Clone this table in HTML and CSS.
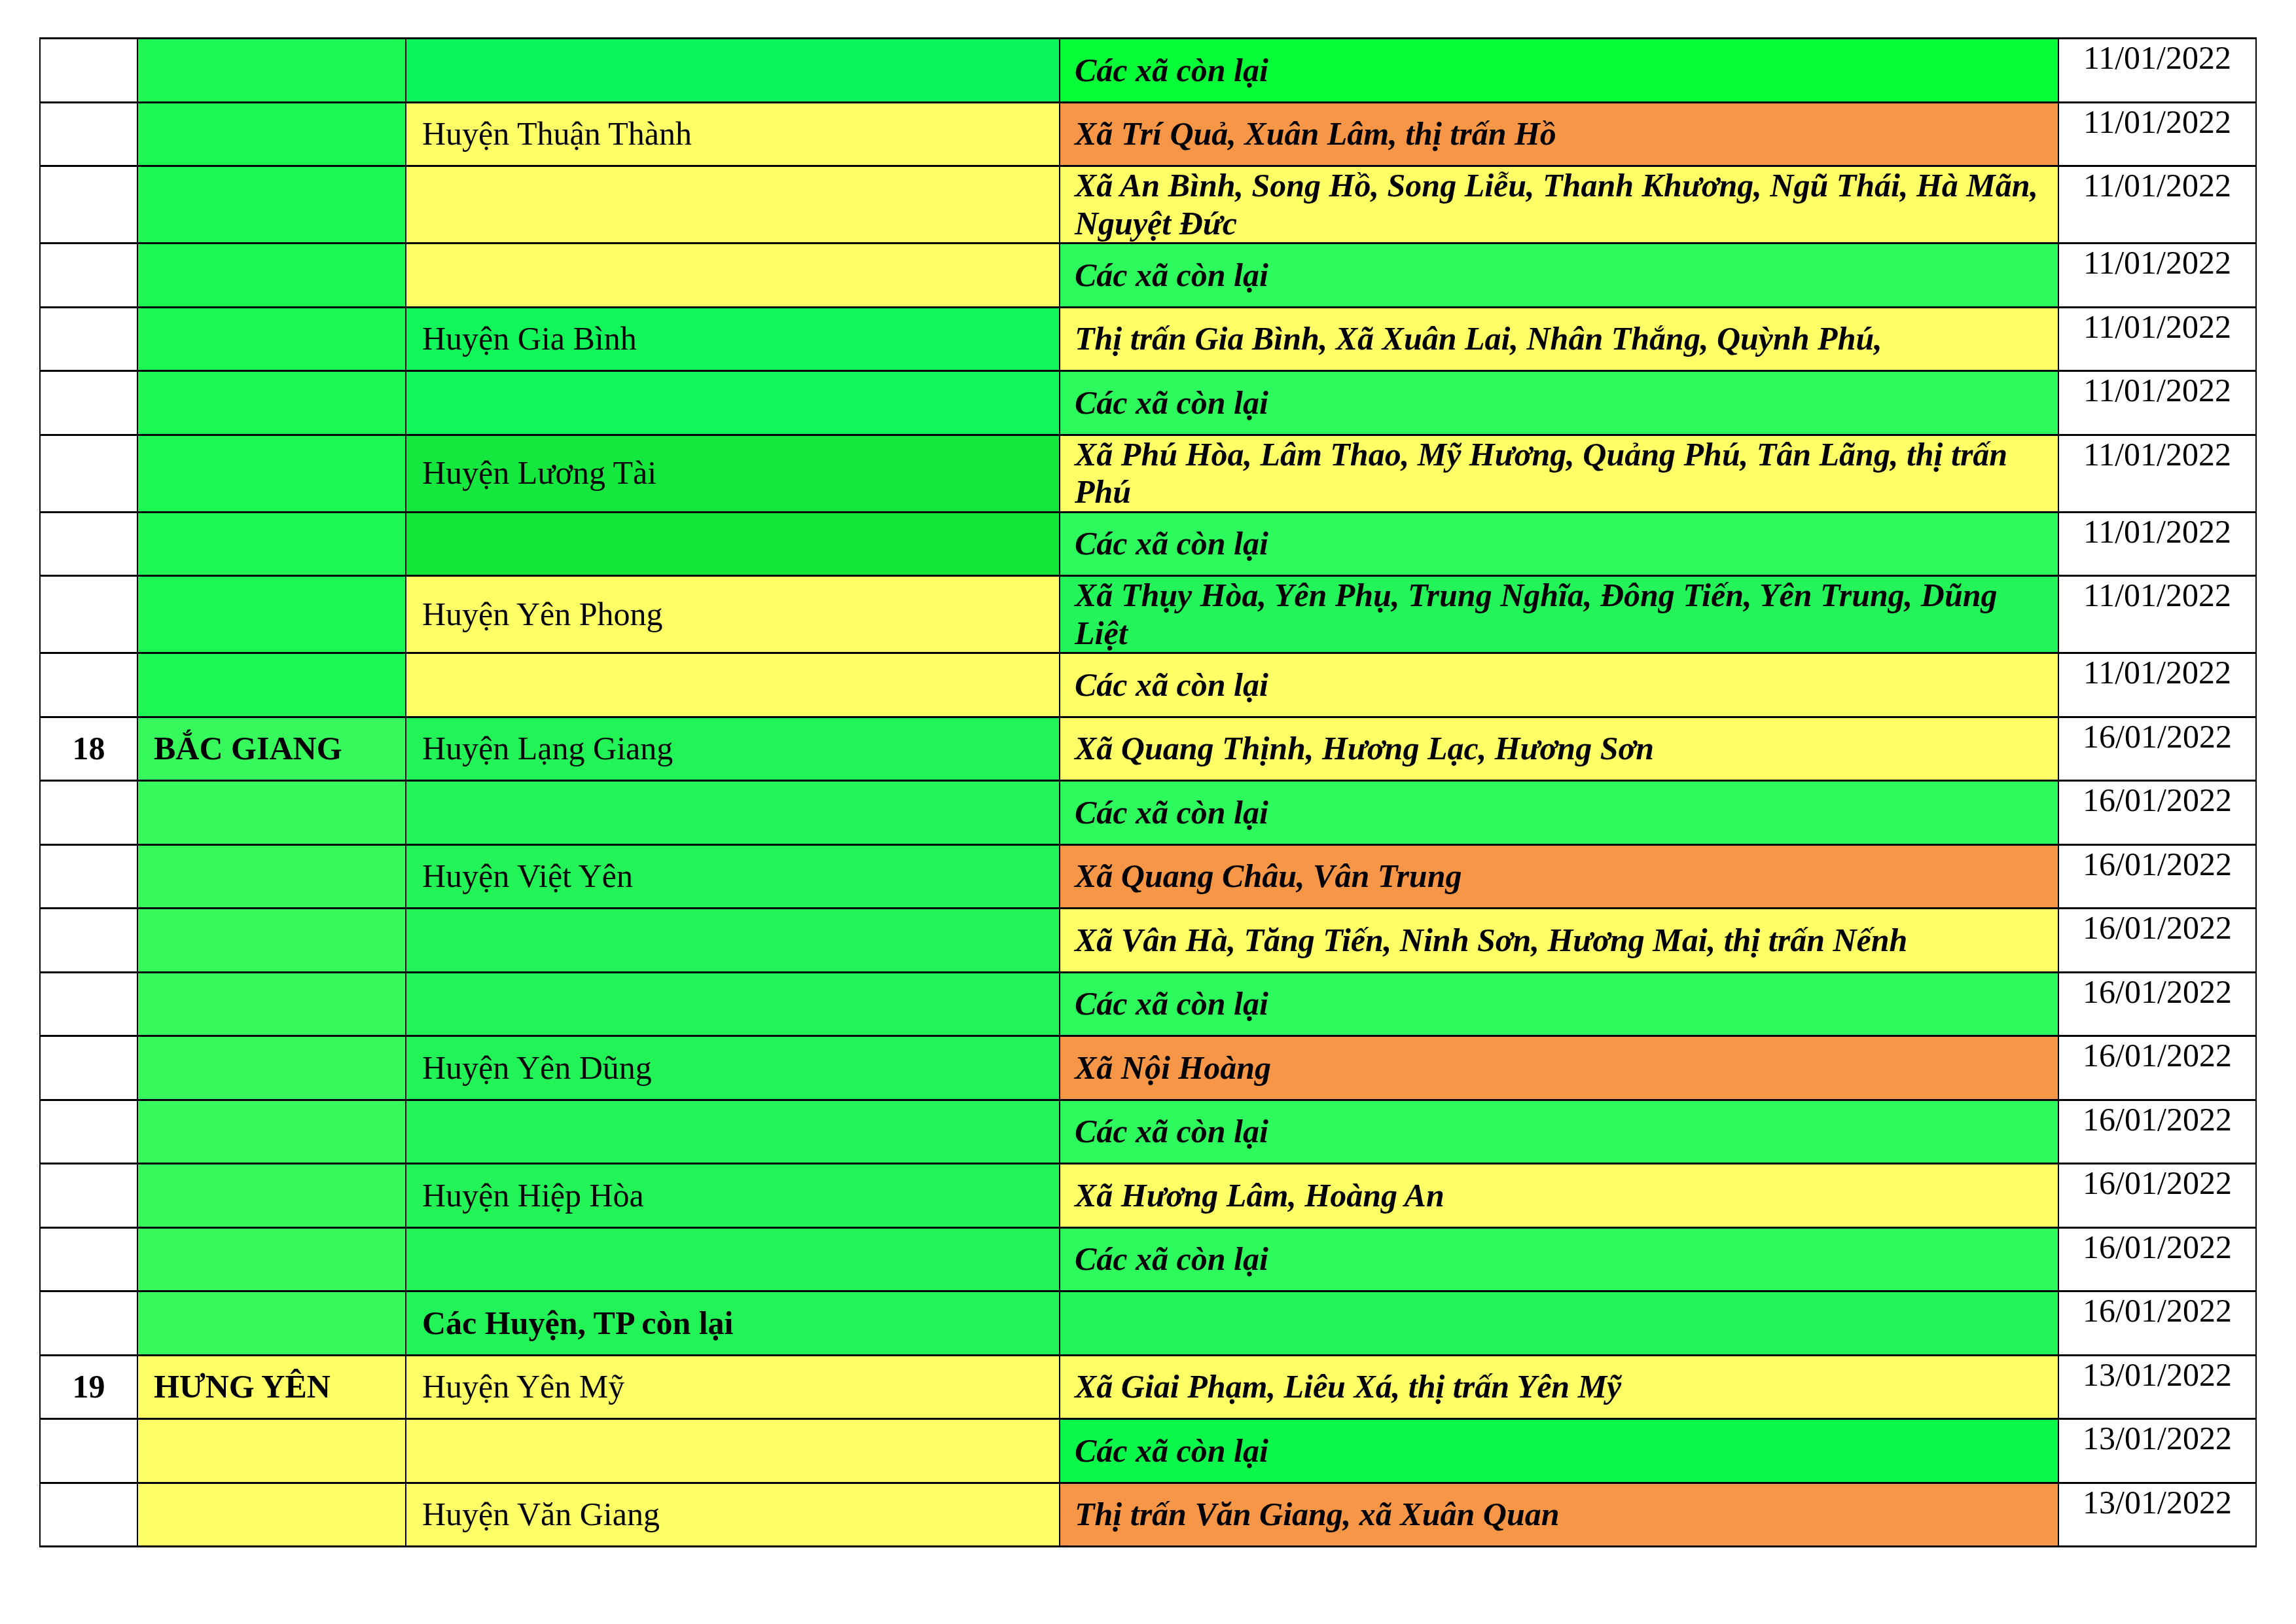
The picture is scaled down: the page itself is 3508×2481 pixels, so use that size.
FILE: index.html
```html
<!DOCTYPE html>
<html lang="vi">
<head>
<meta charset="utf-8">
<title>Bảng đánh giá cấp độ dịch</title>
<link rel="stylesheet" href="styles.css">
</head>
<body>
<div class="page">
  <div class="table">
    <div class="row">
      <div class="cell num"></div>
      <div class="cell prov c-g1"></div>
      <div class="cell dist c-mint"></div>
      <div class="cell comm c-lime">Các xã còn lại</div>
      <div class="cell date">11/01/2022</div>
    </div>
    <div class="row">
      <div class="cell num"></div>
      <div class="cell prov c-g1"></div>
      <div class="cell dist c-yellow">Huyện Thuận Thành</div>
      <div class="cell comm c-orange">Xã Trí Quả, Xuân Lâm, thị trấn Hồ</div>
      <div class="cell date">11/01/2022</div>
    </div>
    <div class="row">
      <div class="cell num"></div>
      <div class="cell prov c-g1"></div>
      <div class="cell dist c-yellow"></div>
      <div class="cell comm c-yellow">Xã An Bình, Song Hồ, Song Liễu, Thanh Khương, Ngũ Thái, Hà Mãn, Nguyệt Đức</div>
      <div class="cell date">11/01/2022</div>
    </div>
    <div class="row">
      <div class="cell num"></div>
      <div class="cell prov c-g1"></div>
      <div class="cell dist c-yellow"></div>
      <div class="cell comm c-green">Các xã còn lại</div>
      <div class="cell date">11/01/2022</div>
    </div>
    <div class="row">
      <div class="cell num"></div>
      <div class="cell prov c-g1"></div>
      <div class="cell dist c-mint2">Huyện Gia Bình</div>
      <div class="cell comm c-yellow">Thị trấn Gia Bình, Xã Xuân Lai, Nhân Thắng, Quỳnh Phú,</div>
      <div class="cell date">11/01/2022</div>
    </div>
    <div class="row">
      <div class="cell num"></div>
      <div class="cell prov c-g1"></div>
      <div class="cell dist c-mint2"></div>
      <div class="cell comm c-green">Các xã còn lại</div>
      <div class="cell date">11/01/2022</div>
    </div>
    <div class="row">
      <div class="cell num"></div>
      <div class="cell prov c-g1"></div>
      <div class="cell dist c-deep">Huyện Lương Tài</div>
      <div class="cell comm c-yellow">Xã Phú Hòa, Lâm Thao, Mỹ Hương, Quảng Phú, Tân Lãng, thị trấn Phú</div>
      <div class="cell date">11/01/2022</div>
    </div>
    <div class="row">
      <div class="cell num"></div>
      <div class="cell prov c-g1"></div>
      <div class="cell dist c-deep2"></div>
      <div class="cell comm c-green">Các xã còn lại</div>
      <div class="cell date">11/01/2022</div>
    </div>
    <div class="row">
      <div class="cell num"></div>
      <div class="cell prov c-g1"></div>
      <div class="cell dist c-yellow">Huyện Yên Phong</div>
      <div class="cell comm c-green2">Xã Thụy Hòa, Yên Phụ, Trung Nghĩa, Đông Tiến, Yên Trung, Dũng Liệt</div>
      <div class="cell date">11/01/2022</div>
    </div>
    <div class="row">
      <div class="cell num"></div>
      <div class="cell prov c-g1"></div>
      <div class="cell dist c-yellow"></div>
      <div class="cell comm c-yellow">Các xã còn lại</div>
      <div class="cell date">11/01/2022</div>
    </div>
    <div class="row">
      <div class="cell num bold">18</div>
      <div class="cell prov c-bright bold">BẮC GIANG</div>
      <div class="cell dist c-mid">Huyện Lạng Giang</div>
      <div class="cell comm c-yellow">Xã Quang Thịnh, Hương Lạc, Hương Sơn</div>
      <div class="cell date">16/01/2022</div>
    </div>
    <div class="row">
      <div class="cell num"></div>
      <div class="cell prov c-bright"></div>
      <div class="cell dist c-mid"></div>
      <div class="cell comm c-green">Các xã còn lại</div>
      <div class="cell date">16/01/2022</div>
    </div>
    <div class="row">
      <div class="cell num"></div>
      <div class="cell prov c-bright"></div>
      <div class="cell dist c-mid">Huyện Việt Yên</div>
      <div class="cell comm c-orange">Xã Quang Châu, Vân Trung</div>
      <div class="cell date">16/01/2022</div>
    </div>
    <div class="row">
      <div class="cell num"></div>
      <div class="cell prov c-bright"></div>
      <div class="cell dist c-mid"></div>
      <div class="cell comm c-yellow">Xã Vân Hà, Tăng Tiến, Ninh Sơn, Hương Mai, thị trấn Nếnh</div>
      <div class="cell date">16/01/2022</div>
    </div>
    <div class="row">
      <div class="cell num"></div>
      <div class="cell prov c-bright"></div>
      <div class="cell dist c-mid"></div>
      <div class="cell comm c-green">Các xã còn lại</div>
      <div class="cell date">16/01/2022</div>
    </div>
    <div class="row">
      <div class="cell num"></div>
      <div class="cell prov c-bright"></div>
      <div class="cell dist c-mid">Huyện Yên Dũng</div>
      <div class="cell comm c-orange">Xã Nội Hoàng</div>
      <div class="cell date">16/01/2022</div>
    </div>
    <div class="row">
      <div class="cell num"></div>
      <div class="cell prov c-bright"></div>
      <div class="cell dist c-mid"></div>
      <div class="cell comm c-green">Các xã còn lại</div>
      <div class="cell date">16/01/2022</div>
    </div>
    <div class="row">
      <div class="cell num"></div>
      <div class="cell prov c-bright"></div>
      <div class="cell dist c-mid">Huyện Hiệp Hòa</div>
      <div class="cell comm c-yellow">Xã Hương Lâm, Hoàng An</div>
      <div class="cell date">16/01/2022</div>
    </div>
    <div class="row">
      <div class="cell num"></div>
      <div class="cell prov c-bright"></div>
      <div class="cell dist c-mid"></div>
      <div class="cell comm c-green">Các xã còn lại</div>
      <div class="cell date">16/01/2022</div>
    </div>
    <div class="row">
      <div class="cell num"></div>
      <div class="cell prov c-bright"></div>
      <div class="cell dist c-mid bold">Các Huyện, TP còn lại</div>
      <div class="cell comm c-mid"></div>
      <div class="cell date">16/01/2022</div>
    </div>
    <div class="row">
      <div class="cell num bold">19</div>
      <div class="cell prov c-yellow bold">HƯNG YÊN</div>
      <div class="cell dist c-yellow">Huyện Yên Mỹ</div>
      <div class="cell comm c-yellow">Xã Giai Phạm, Liêu Xá, thị trấn Yên Mỹ</div>
      <div class="cell date">13/01/2022</div>
    </div>
    <div class="row">
      <div class="cell num"></div>
      <div class="cell prov c-yellow"></div>
      <div class="cell dist c-yellow"></div>
      <div class="cell comm c-lime2">Các xã còn lại</div>
      <div class="cell date">13/01/2022</div>
    </div>
    <div class="row">
      <div class="cell num"></div>
      <div class="cell prov c-yellow"></div>
      <div class="cell dist c-yellow">Huyện Văn Giang</div>
      <div class="cell comm c-orange">Thị trấn Văn Giang, xã Xuân Quan</div>
      <div class="cell date">13/01/2022</div>
    </div>
  </div>
</div>
</body>
</html>
```

FILE: styles.css
```css
html, body {
  margin: 0;
  padding: 0;
  background: #ffffff;
}

body {
  font-family: "Liberation Serif", "Times New Roman", serif;
  font-size: 50px;
  line-height: 1.15;
  color: #000000;
}

.page {
  padding: 57px 0 0 60px;
}

.table {
  width: 3388px;
  border-top: 3px solid #000;
  border-left: 2px solid #000;
  box-sizing: border-box;
}

.row {
  display: grid;
  grid-template-columns: 149px 410px 999px 1526px 302px;
}

.cell {
  box-sizing: border-box;
  min-height: 97.5px;
  border-right: 2px solid #000;
  border-bottom: 3px solid #000;
  display: flex;
  align-items: center;
  padding: 0 23px;
  background: #ffffff;
}

.num {
  justify-content: center;
  padding: 0;
}

.prov {
  padding-left: 24px;
}

.dist {
  padding-left: 24px;
}

.comm {
  font-weight: bold;
  font-style: italic;
  padding-left: 22px;
  padding-right: 14px;
}

.date {
  justify-content: center;
  align-items: flex-start;
  padding: 0;
}

.bold {
  font-weight: bold;
}

.c-g1 { background: #1cf753; }
.c-mint { background: #0bf55b; }
.c-mint2 { background: #10f75a; }
.c-lime { background: #05fc36; }
.c-lime2 { background: #0af84a; }
.c-yellow { background: #ffff66; }
.c-orange { background: #f79646; }
.c-green { background: #2dfa5c; }
.c-green2 { background: #22f45a; }
.c-deep { background: #14e73d; }
.c-deep2 { background: #10e634; }
.c-bright { background: #36f95b; }
.c-mid { background: #22f458; }
```
